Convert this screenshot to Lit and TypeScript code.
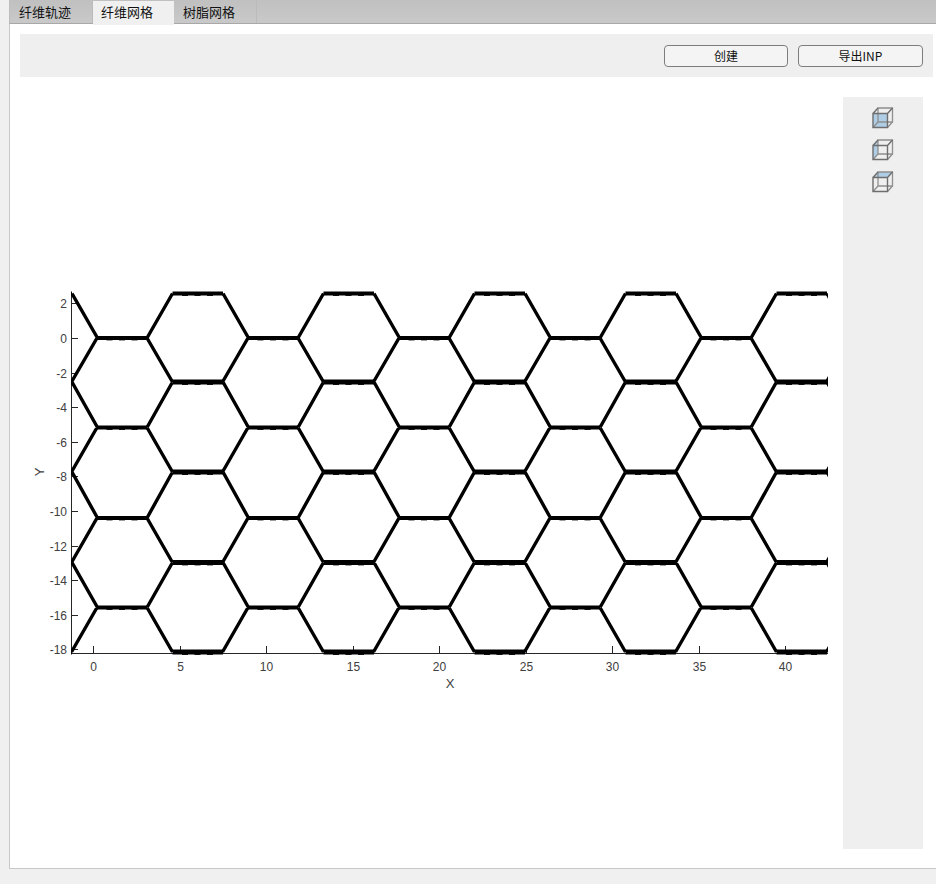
import { LitElement, html, css, svg } from "lit";
import { customElement } from "lit/decorators.js";

const UX = 17.3;
const X0 = 93.5;
const Y0 = 338;
const PERIOD = 151;
const ROWS = [293.5, 338, 382, 427.5, 472, 518, 562.5, 607.5, 652];

function meshPath() {
  let diag = "";
  let odd = "";
  let even = "";
  let top = "";
  let bumps = "";
  for (let k = -1; k < 6; k++) {
    const ox = PERIOD * k;
    ROWS.forEach((y, r) => {
      const isEven = r % 2 === 0;
      const a = (isEven ? 172.5 : 97) + ox;
      const b = (isEven ? 223 : 147) + ox;
      const seg = `M${a} ${y}L${b} ${y}`;
      if (r === 0) top += seg;
      else if (isEven) even += seg;
      else odd += seg;
      for (let i = 1; i < 4; i++) {
        const bx = a + i * 12.5;
        bumps += `M${bx - 3} ${y + (isEven && r > 0 ? 2.4 : 1.9)}h6`;
      }
      const next = ROWS[r + 1];
      if (next !== undefined) {
        diag += `M${a} ${y}L${a - 25.5} ${next}M${b} ${y}L${b + 25.5} ${next}`;
      }
    });
  }
  return { diag, odd, even, top, bumps };
}

@customElement("cube-icon")
class CubeIcon extends LitElement {
  static properties = { face: {} };
  face = "";
  static styles = css`
    :host { display: block; width: 22px; height: 22px; }
    svg { display: block; }
    .face { fill: #b0cde6; }
    .back { fill: none; stroke: #8f8f8f; stroke-width: 1.3; }
    .front { fill: none; stroke: #6e6e6e; stroke-width: 1.4; }
  `;
  render() {
    const fill: Record<string, string> = {
      front: "M1 6.5H15.5V20.5H1Z",
      left: "M1 6.5L6 1V15L1 20.5Z",
      top: "M1 6.5L6 1H20.5L15.5 6.5Z",
    };
    return html`<svg width="22" height="22" viewBox="0 0 22 22">
      <path class="face" d=${fill[this.face]}></path>
      <path class="back" d="M6 1H20.5V15H6ZM6 15L1 20.5M20.5 15L15.5 20.5"></path>
      <path class="front" d="M1 6.5H15.5V20.5H1ZM1 6.5L6 1M15.5 6.5L20.5 1"></path>
    </svg>`;
  }
}

@customElement("mesh-plot")
class MeshPlot extends LitElement {
  static styles = css`
    :host { display: block; flex: 1; min-width: 0; }
    svg { display: block; }
    text { font-family: "Liberation Sans", Arial, sans-serif; font-size: 12px; fill: #404040; }
    .label { font-size: 13px; }
    .axis { stroke: #262626; stroke-width: 1; fill: none; }
    .mesh { stroke: #000; fill: none; stroke-linejoin: round; }
    .d { stroke-width: 3.4; }
    .t { stroke-width: 3.8; }
    .o { stroke-width: 3.8; }
    .e { stroke-width: 4.8; }
    .b { stroke-width: 1; }
  `;
  render() {
    const { diag, odd, even, top, bumps } = meshPath();
    const yt = [2, 0, -2, -4, -6, -8, -10, -12, -14, -16, -18];
    const xt = [0, 5, 10, 15, 20, 25, 30, 35, 40];
    // svg origin at page (20, 97)
    return html`<svg width="823" height="752" viewBox="20 97 823 752">
      <defs><clipPath id="c"><rect x="71" y="288" width="757" height="368"></rect></clipPath></defs>
      <path class="axis" d="M71.5 292V653.5H828"></path>
      ${yt.map((v) => {
        const y = Math.round(Y0 - v * UX) + 0.5;
        return svg`<path class="axis" d="M71.5 ${y}H78"></path>
          <text x="67" y=${y + 4} text-anchor="end">${v}</text>`;
      })}
      ${xt.map((v) => {
        const x = Math.floor(X0 + v * UX) + 0.5;
        return svg`<path class="axis" d="M${x} 653V646"></path>
          <text x=${x} y="670.5" text-anchor="middle">${v}</text>`;
      })}
      <g clip-path="url(#c)">
        <path class="mesh d" d=${diag}></path>
        <path class="mesh o" d=${odd}></path>
        <path class="mesh t" d=${top}></path>
        <path class="mesh e" d=${even}></path>
        <path class="mesh b" d=${bumps}></path>
      </g>
      <text class="label" x="450" y="688" text-anchor="middle">X</text>
      <text class="label" transform="translate(44 472) rotate(-90)" text-anchor="middle">Y</text>
    </svg>`;
  }
}

@customElement("app-root")
class AppRoot extends LitElement {
  static styles = css`
    :host {
      display: block;
      width: 936px;
      height: 884px;
      background: #f0f0f0;
      box-sizing: border-box;
      padding-left: 9px;
      overflow: hidden;
      font-family: "Noto Sans CJK SC", "Liberation Sans", sans-serif;
      font-size: 12px;
      color: #111;
    }
    .tabs {
      display: flex;
      height: 24px;
      box-sizing: border-box;
      background: linear-gradient(#c0c0c0, #c9c9c9);
      border-bottom: 1px solid #a8a8a8;
      border-left: 1px solid #bdbdbd;
      font-size: 13px;
    }
    .tab {
      width: 81px;
      box-sizing: border-box;
      padding-left: 9px;
      line-height: 23px;
      border-right: 1px solid #bbb;
    }
    .tab.first { width: 83px; }
    .tab.on {
      background: #f0f0f0;
      height: 24px;
      margin-top: 1px;
      line-height: 22px;
      padding-left: 8px;
      border-right: 0;
    }
    .tab.last { width: 83px; padding-left: 9px; }
    .panel {
      height: 845px;
      box-sizing: border-box;
      background: #fff;
      border-left: 1px solid #c8c8c8;
      border-bottom: 1px solid #c8c8c8;
      padding: 10px 3px 0 10px;
      display: flex;
      flex-direction: column;
      gap: 20px;
    }
    .toolbar {
      height: 43px;
      flex: none;
      background: #efefef;
      display: flex;
      justify-content: flex-end;
      align-items: center;
      gap: 10px;
      padding-right: 10px;
    }
    button {
      font: inherit;
      color: inherit;
      width: 124px;
      height: 22px;
      padding: 0;
      background: #f4f4f4;
      border: 1px solid #7d7d7d;
      border-radius: 4px;
    }
    button.wide { width: 125px; }
    .body { display: flex; height: 752px; }
    .side {
      width: 80px;
      flex: none;
      margin-right: 10px;
      background: #efefef;
      display: flex;
      flex-direction: column;
      align-items: center;
      gap: 10px;
      padding-top: 10px;
      box-sizing: border-box;
    }
  `;
  render() {
    return html`
      <div class="tabs">
        <div class="tab first">纤维轨迹</div>
        <div class="tab on">纤维网格</div>
        <div class="tab last">树脂网格</div>
      </div>
      <div class="panel">
        <div class="toolbar">
          <button>创建</button>
          <button class="wide">导出INP</button>
        </div>
        <div class="body">
          <mesh-plot></mesh-plot>
          <div class="side">
            <cube-icon face="front"></cube-icon>
            <cube-icon face="left"></cube-icon>
            <cube-icon face="top"></cube-icon>
          </div>
        </div>
      </div>
    `;
  }
}
